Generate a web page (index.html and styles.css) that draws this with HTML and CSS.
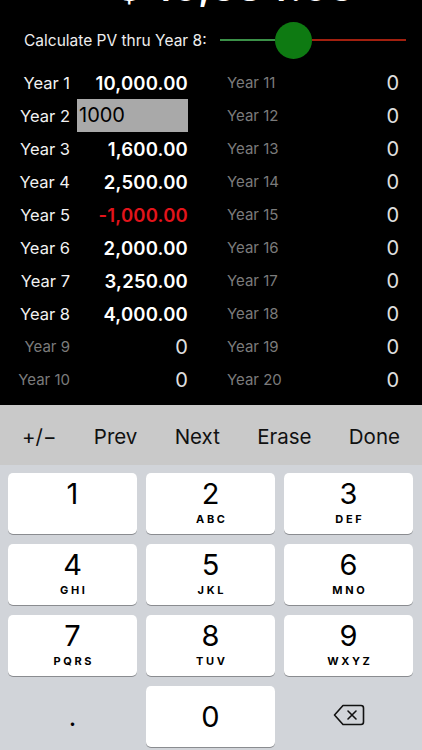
FILE: index.html
```html
<!DOCTYPE html>
<html>
<head>
  <title>Present Value</title>
  <link rel="stylesheet" href="styles.css">
</head>
<body>
  <div class="screen">
    <div class="total"><span>$ 16,384.63</span></div>

    <div class="pv-row">
      <span class="pv-label">Calculate PV thru Year 8:</span>
      <div class="slider">
        <span class="track-left"></span>
        <span class="thumb"></span>
        <span class="track-right"></span>
      </div>
    </div>

    <div class="years">
      <div class="col left">
        <div class="row"><span class="label">Year 1</span><span class="value">10,000.00</span></div>
        <div class="row"><span class="label">Year 2</span><span class="input">1000</span></div>
        <div class="row"><span class="label">Year 3</span><span class="value">1,600.00</span></div>
        <div class="row"><span class="label">Year 4</span><span class="value">2,500.00</span></div>
        <div class="row"><span class="label">Year 5</span><span class="value neg">-1,000.00</span></div>
        <div class="row"><span class="label">Year 6</span><span class="value">2,000.00</span></div>
        <div class="row"><span class="label">Year 7</span><span class="value">3,250.00</span></div>
        <div class="row"><span class="label">Year 8</span><span class="value">4,000.00</span></div>
        <div class="row off"><span class="label">Year 9</span><span class="value">0</span></div>
        <div class="row off"><span class="label">Year 10</span><span class="value">0</span></div>
      </div>
      <div class="col right">
        <div class="row off"><span class="label">Year 11</span><span class="value">0</span></div>
        <div class="row off"><span class="label">Year 12</span><span class="value">0</span></div>
        <div class="row off"><span class="label">Year 13</span><span class="value">0</span></div>
        <div class="row off"><span class="label">Year 14</span><span class="value">0</span></div>
        <div class="row off"><span class="label">Year 15</span><span class="value">0</span></div>
        <div class="row off"><span class="label">Year 16</span><span class="value">0</span></div>
        <div class="row off"><span class="label">Year 17</span><span class="value">0</span></div>
        <div class="row off"><span class="label">Year 18</span><span class="value">0</span></div>
        <div class="row off"><span class="label">Year 19</span><span class="value">0</span></div>
        <div class="row off"><span class="label">Year 20</span><span class="value">0</span></div>
      </div>
    </div>
  </div>

  <div class="toolbar">
    <span>+/&minus;</span>
    <span>Prev</span>
    <span>Next</span>
    <span>Erase</span>
    <span>Done</span>
  </div>

  <div class="keyboard">
    <div class="key"><span class="digit">1</span></div>
    <div class="key"><span class="digit">2</span><span class="letters">ABC</span></div>
    <div class="key"><span class="digit">3</span><span class="letters">DEF</span></div>
    <div class="key"><span class="digit">4</span><span class="letters">GHI</span></div>
    <div class="key"><span class="digit">5</span><span class="letters">JKL</span></div>
    <div class="key"><span class="digit">6</span><span class="letters">MNO</span></div>
    <div class="key"><span class="digit">7</span><span class="letters">PQRS</span></div>
    <div class="key"><span class="digit">8</span><span class="letters">TUV</span></div>
    <div class="key"><span class="digit">9</span><span class="letters">WXYZ</span></div>
    <div class="key flat"><span class="dot">.</span></div>
    <div class="key zero"><span class="digit">0</span></div>
    <div class="key flat">
      <svg class="backspace" width="32" height="22" viewBox="0 0 32 22">
        <path d="M10 1.5 H28 a2.5 2.5 0 0 1 2.5 2.5 V18 a2.5 2.5 0 0 1 -2.5 2.5 H10 L1.5 11 Z" fill="none" stroke="#111" stroke-width="1.6" stroke-linejoin="round"/>
        <path d="M15 7 L23 15 M23 7 L15 15" stroke="#111" stroke-width="1.6" stroke-linecap="round"/>
      </svg>
    </div>
  </div>
  <div class="bottom-line"></div>
</body>
</html>
```

FILE: styles.css
```css
body {
  margin: 0;
  width: 422px;
  background: #000;
  font-family: Inter, "Noto Sans", sans-serif;
}
.screen {
  height: 405px;
  background: #000;
  color: #fff;
}
.total {
  height: 7px;
  overflow: hidden;
  padding-left: 50px;
  text-align: center;
}
.total span {
  display: block;
  font-size: 38px;
  font-weight: 600;
  line-height: 38px;
  margin-top: -32px;
  letter-spacing: 2px;
}
.pv-row {
  display: flex;
  align-items: center;
  height: 52px;
  padding: 7px 0 0 24px;
}
.pv-label {
  font-size: 15.5px;
  color: #eee;
  width: 196px;
}
.slider {
  display: flex;
  align-items: center;
}
.track-left {
  width: 55px;
  height: 2px;
  background: #3b9048;
}
.thumb {
  width: 37px;
  height: 37px;
  border-radius: 50%;
  background: #0e7a12;
}
.track-right {
  width: 94px;
  height: 2px;
  background: #a2200f;
}
.years {
  display: flex;
}
.col.left {
  width: 188px;
}
.col.right {
  width: 188px;
  margin-left: 23px;
}
.row {
  display: flex;
  align-items: center;
  height: 33px;
}
.left .label {
  width: 77px;
  padding-right: 7px;
  text-align: right;
  box-sizing: border-box;
  font-size: 16.5px;
  color: #f2f2f2;
}
.left .value {
  flex: 1;
  text-align: right;
  font-size: 18.5px;
  font-weight: 600;
  letter-spacing: 0.2px;
}
.value.neg {
  color: #e3141b;
}
.input {
  flex: 1;
  height: 33px;
  line-height: 33px;
  background: #a9a9a9;
  color: #000;
  font-size: 20px;
  padding-left: 2px;
}
.row.off .label {
  color: #7b7b7b;
  font-size: 15px;
}
.row.off .value {
  color: #e0e0e0;
  font-size: 20px;
  font-weight: 400;
}
.right .label {
  padding-left: 16px;
  color: #7b7b7b;
  font-size: 15px;
}
.right .value {
  flex: 1;
  text-align: right;
}
.toolbar {
  height: 60px;
  background: #c9c9c9;
  display: flex;
  align-items: center;
  justify-content: space-between;
  padding: 2px 22px 0 22px;
  box-sizing: border-box;
  font-size: 20.5px;
  color: #111;
}
.keyboard {
  background: #d1d4d9;
  display: grid;
  grid-template-columns: 1fr 1fr 1fr;
  grid-auto-rows: 61px;
  gap: 10px 9px;
  padding: 8px 9px 3px 8px;
}
.key {
  background: #fff;
  border-radius: 5px;
  box-shadow: 0 1px 0 #8a8c90;
  display: flex;
  flex-direction: column;
  align-items: center;
  padding-top: 5px;
  box-sizing: border-box;
  color: #000;
}
.digit {
  font-size: 29px;
  line-height: 32px;
}
.letters {
  font-size: 11px;
  font-weight: 700;
  letter-spacing: 2.6px;
  margin-right: -2.6px;
  line-height: 14px;
  margin-top: 2px;
}
.key.zero,
.key.flat {
  justify-content: center;
  padding-top: 0;
}
.key.flat {
  background: transparent;
  box-shadow: none;
}
.dot {
  font-size: 26px;
  line-height: 26px;
}
.backspace {
  margin-bottom: 4px;
}
.bottom-line {
  height: 2px;
  background: #222;
}
```
